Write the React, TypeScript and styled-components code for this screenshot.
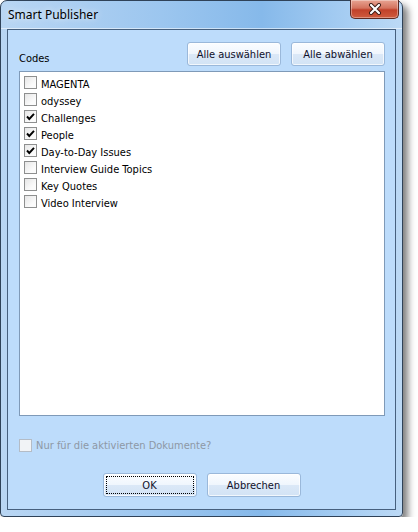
import styled, { createGlobalStyle } from 'styled-components';

const Global = createGlobalStyle`
  html, body { margin: 0; padding: 0; background: #fff; }
  * { box-sizing: border-box; }
`;

const Window = styled.div`
  width: 403px;
  height: 517px;
  display: flex;
  flex-direction: column;
  border: 1px solid #2f4258;
  border-radius: 7px 7px 4px 4px;
  background: linear-gradient(90deg, #b9d6f3 0%, #9cc6ef 40%, #86b9ea 65%, #a9cff3 88%, #bcd9f5 100%);
  box-shadow: 5px 5px 7px rgba(0, 0, 0, 0.5);
  font-family: "DejaVu Sans Condensed", "DejaVu Sans", sans-serif;
  font-size: 11px;
  color: #000;
`;

const TitleBar = styled.div`
  height: 28px;
  display: flex;
  align-items: flex-start;
  padding: 0 3px 0 7px;
  border-bottom: 1px solid rgba(255, 255, 255, 0.55);
`;

const Title = styled.div`
  font-family: "Noto Sans", "Open Sans", sans-serif;
  font-size: 12px;
  line-height: 16px;
  margin-top: 6px;
  text-shadow: 0 0 6px rgba(255, 255, 255, 0.9);
`;

const CloseBtn = styled.div`
  margin-left: auto;
  margin-top: -1px;
  width: 49px;
  height: 19px;
  border: 1px solid #5e2a22;
  border-top: none;
  border-radius: 0 0 5px 5px;
  background: linear-gradient(180deg, #e8a493 0%, #d4735e 45%, #c1412a 55%, #cf5b3e 100%);
  box-shadow: inset 0 0 0 1px rgba(255, 255, 255, 0.35);
  display: flex;
  align-items: center;
  justify-content: center;
`;

const Client = styled.div`
  flex: 1;
  margin: 0 6px 6px 6px;
  border: 1px solid #46607e;
  background: #bddcfb;
  padding: 12px 10px 0 11px;
  display: flex;
  flex-direction: column;
`;

const TopRow = styled.div`
  display: flex;
  align-items: flex-end;
  gap: 10px;
  height: 24px;
`;

const Label = styled.div`
  margin-right: auto;
  padding-bottom: 1px;
`;

const Button = styled.button<{ $focus?: boolean }>`
  width: 94px;
  height: 24px;
  padding: 0;
  font: inherit;
  color: #10102a;
  border: 1px solid #9ab8da;
  border-radius: 3px;
  background: linear-gradient(180deg, #fbfdff 0%, #f0f6fd 48%, #dbe8f7 52%, #d2e3f5 100%);
  box-shadow: inset 0 0 0 1px rgba(255, 255, 255, 0.7);
  position: relative;
  ${p => p.$focus && `
    &::after {
      content: '';
      position: absolute;
      inset: 2px;
      border: 1px dotted #000;
    }
  `}
`;

const ListBox = styled.div`
  margin-top: 5px;
  height: 345px;
  background: #fff;
  border: 1px solid #7f9ab8;
  padding: 4px 4px;
`;

const Item = styled.div<{ $disabled?: boolean }>`
  display: flex;
  align-items: center;
  height: 17px;
  gap: 4px;
  color: ${p => (p.$disabled ? '#8d98a5' : '#000')};
  & > span:first-child { align-self: flex-start; }
`;

const Box = styled.span<{ $disabled?: boolean }>`
  width: 13px;
  height: 13px;
  flex: none;
  border: 1px solid ${p => (p.$disabled ? '#b4bcc6' : '#8e8f8f')};
  background: ${p => (p.$disabled ? '#f1f3f6' : 'linear-gradient(135deg, #e6e6e6 0%, #fbfbfb 70%)')};
  display: flex;
  align-items: center;
  justify-content: center;
`;

const OptionRow = styled(Item)`
  margin-top: 23px;
  height: 13px;
  & > span:first-child { align-self: center; }
`;

const Footer = styled.div`
  margin-top: 21px;
  display: flex;
  justify-content: center;
  gap: 10px;
  padding-right: 1px;
`;

function Check({ checked, disabled }: { checked?: boolean; disabled?: boolean }) {
  return (
    <Box $disabled={disabled}>
      {checked && (
        <svg width="11" height="11" viewBox="0 0 11 11">
          <path d="M2 5.5 L4.3 8 L9 2.8" fill="none" stroke="#000" strokeWidth="1.9" />
        </svg>
      )}
    </Box>
  );
}

const codes = [
  { name: 'MAGENTA', checked: false },
  { name: 'odyssey', checked: false },
  { name: 'Challenges', checked: true },
  { name: 'People', checked: true },
  { name: 'Day-to-Day Issues', checked: true },
  { name: 'Interview Guide Topics', checked: false },
  { name: 'Key Quotes', checked: false },
  { name: 'Video Interview', checked: false },
];

export default function App() {
  return (
    <>
      <Global />
      <Window>
        <TitleBar>
          <Title>Smart Publisher</Title>
          <CloseBtn>
            <svg width="14" height="12" viewBox="0 0 14 12">
              <path d="M3 2 L11 10 M11 2 L3 10" stroke="#3a1a14" strokeWidth="4" strokeLinecap="round" />
              <path d="M3 2 L11 10 M11 2 L3 10" stroke="#fff" strokeWidth="2.2" strokeLinecap="round" />
            </svg>
          </CloseBtn>
        </TitleBar>
        <Client>
          <TopRow>
            <Label>Codes</Label>
            <Button>Alle auswählen</Button>
            <Button>Alle abwählen</Button>
          </TopRow>
          <ListBox>
            {codes.map(c => (
              <Item key={c.name}>
                <Check checked={c.checked} />
                <span>{c.name}</span>
              </Item>
            ))}
          </ListBox>
          <OptionRow $disabled>
            <Check disabled />
            <span>Nur für die aktivierten Dokumente?</span>
          </OptionRow>
          <Footer>
            <Button $focus>OK</Button>
            <Button>Abbrechen</Button>
          </Footer>
        </Client>
      </Window>
    </>
  );
}
